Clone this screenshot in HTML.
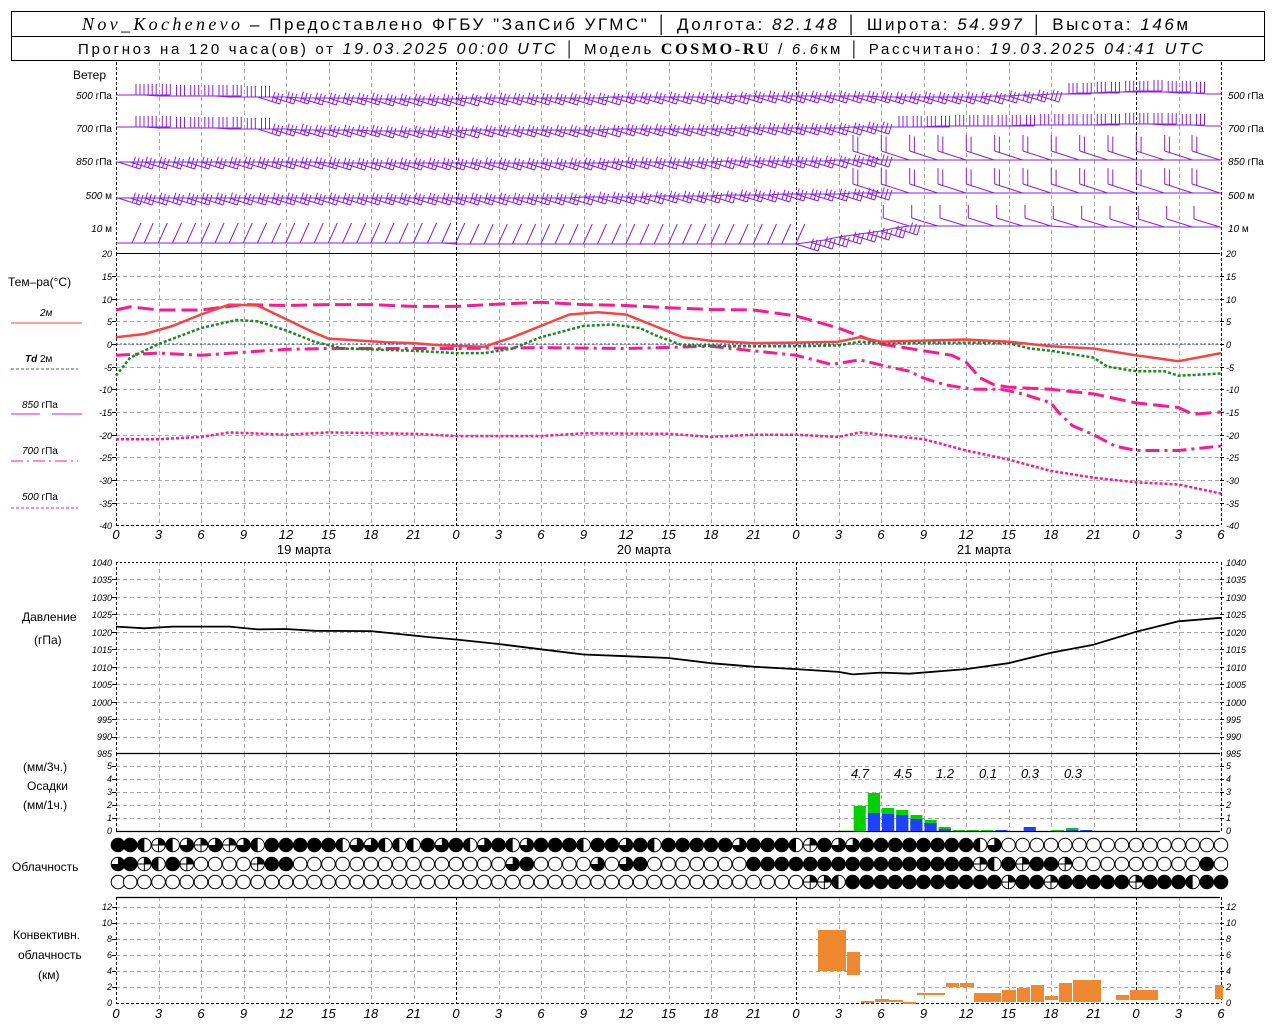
<!DOCTYPE html>
<html><head><meta charset="utf-8"><style>
html,body{margin:0;padding:0;background:#fff;}
svg{display:block;}
text{font-family:"Liberation Sans",sans-serif;fill:#000;}
.n{font-size:10px;font-style:italic;}
.ns{font-size:9px;font-style:italic;}
.l{font-size:12px;}
</style></head><body>
<svg id="g" width="1280" height="1024" viewBox="0 0 1280 1024" xmlns="http://www.w3.org/2000/svg">
<rect x="0" y="0" width="1280" height="1024" fill="#fff"/>
<g id="grid"></g>
<g id="data"></g>
<!-- header -->
<rect x="11.5" y="11.5" width="1253" height="49" fill="none" stroke="#000"/>
<line x1="11" y1="36.5" x2="1265" y2="36.5" stroke="#000"/>
<text x="82" y="30" textLength="158" lengthAdjust="spacing" style="font-size:18px;font-style:italic;font-family:'Liberation Serif',serif">Nov_Kochenevo</text>
<text x="250" y="30" textLength="938" lengthAdjust="spacing" style="font-size:17px">– Предоставлено ФГБУ "ЗапСиб УГМС" │ Долгота: <tspan font-style="italic">82.148</tspan> │ Широта: <tspan font-style="italic">54.997</tspan> │ Высота: <tspan font-style="italic">146</tspan>м</text>
<text x="78" y="54" textLength="1125" lengthAdjust="spacing" style="font-size:15px">Прогноз на 120 часа(ов) от <tspan font-style="italic" font-size="16">19.03.2025 00:00 UTC</tspan>  │ Модель <tspan font-weight="bold" font-family="Liberation Serif,serif" font-size="16">COSMO-RU</tspan> / <tspan font-style="italic">6.6</tspan>км │ Рассчитано: <tspan font-style="italic" font-size="16">19.03.2025 04:41 UTC</tspan></text>

<!-- wind labels -->
<text class="l" x="73" y="79">Ветер</text>
<g class="n" text-anchor="end">
<text x="112" y="99">500 <tspan font-style="normal">гПа</tspan></text>
<text x="112" y="132">700 <tspan font-style="normal">гПа</tspan></text>
<text x="112" y="165">850 <tspan font-style="normal">гПа</tspan></text>
<text x="112" y="199">500 <tspan font-style="normal">м</tspan></text>
<text x="112" y="232">10 <tspan font-style="normal">   м</tspan></text>
</g>
<g class="n">
<text x="1228" y="99">500 <tspan font-style="normal">гПа</tspan></text>
<text x="1228" y="132">700 <tspan font-style="normal">гПа</tspan></text>
<text x="1228" y="165">850 <tspan font-style="normal">гПа</tspan></text>
<text x="1228" y="199">500 <tspan font-style="normal">м</tspan></text>
<text x="1228" y="232">10 <tspan font-style="normal">   м</tspan></text>
</g>

<!-- temp legend -->
<text class="l" x="8" y="286">Тем–ра(°С)</text>
<text class="n" x="40" y="316" font-style="normal">2м</text>
<line x1="11" y1="323" x2="82" y2="323" stroke="#ff4040"/>
<text class="n" x="25" y="362"><tspan font-weight="bold">Td</tspan> <tspan font-style="normal">  2м</tspan></text>
<line x1="11" y1="369" x2="78" y2="369" stroke="#1a8a1a" stroke-dasharray="3,2"/>
<text class="n" x="22" y="408">850 <tspan font-style="normal">гПа</tspan></text>
<line x1="11" y1="414" x2="40" y2="414" stroke="#ff1a8c"/><line x1="52" y1="414" x2="82" y2="414" stroke="#ff1a8c"/>
<text class="n" x="22" y="454">700 <tspan font-style="normal">гПа</tspan></text>
<line x1="11" y1="461" x2="78" y2="461" stroke="#ff1a8c" stroke-dasharray="12,4,2,4"/>
<text class="n" x="22" y="500">500 <tspan font-style="normal">гПа</tspan></text>
<line x1="11" y1="508" x2="78" y2="508" stroke="#ff1a8c" stroke-dasharray="3,2"/>

<!-- temp ticks -->
<g class="ns" text-anchor="end">
<text x="112" y="257">20</text><text x="112" y="280">15</text><text x="112" y="303">10</text><text x="112" y="325">5</text><text x="112" y="348">0</text><text x="112" y="371">-5</text><text x="112" y="393">-10</text><text x="112" y="416">-15</text><text x="112" y="439">-20</text><text x="112" y="461">-25</text><text x="112" y="484">-30</text><text x="112" y="507">-35</text><text x="112" y="529">-40</text>
</g>
<g class="ns">
<text x="1226" y="257">20</text><text x="1226" y="280">15</text><text x="1226" y="303">10</text><text x="1226" y="325">5</text><text x="1226" y="348">0</text><text x="1226" y="371">-5</text><text x="1226" y="393">-10</text><text x="1226" y="416">-15</text><text x="1226" y="439">-20</text><text x="1226" y="461">-25</text><text x="1226" y="484">-30</text><text x="1226" y="507">-35</text><text x="1226" y="529">-40</text>
</g>

<!-- hour labels -->
<g class="n" text-anchor="middle" style="font-size:13px">
<text x="116" y="539">0</text><text x="158.5" y="539">3</text><text x="201" y="539">6</text><text x="243.5" y="539">9</text><text x="286" y="539">12</text><text x="328.5" y="539">15</text><text x="371" y="539">18</text><text x="413.5" y="539">21</text><text x="456" y="539">0</text><text x="498.5" y="539">3</text><text x="541" y="539">6</text><text x="583.5" y="539">9</text><text x="626" y="539">12</text><text x="668.5" y="539">15</text><text x="711" y="539">18</text><text x="753.5" y="539">21</text><text x="796" y="539">0</text><text x="838.5" y="539">3</text><text x="881" y="539">6</text><text x="923.5" y="539">9</text><text x="966" y="539">12</text><text x="1008.5" y="539">15</text><text x="1051" y="539">18</text><text x="1093.5" y="539">21</text><text x="1136" y="539">0</text><text x="1178.5" y="539">3</text><text x="1221" y="539">6</text>
</g>
<g class="l" text-anchor="middle" style="font-size:13px">
<text x="304" y="554">19 марта</text><text x="644" y="554">20 марта</text><text x="984" y="554">21 марта</text>
</g>

<!-- pressure -->
<text class="l" x="22" y="621">Давление</text>
<text class="l" x="34" y="644">(гПа)</text>
<g class="ns" text-anchor="end">
<text x="112" y="566">1040</text><text x="112" y="583">1035</text><text x="112" y="601">1030</text><text x="112" y="618">1025</text><text x="112" y="636">1020</text><text x="112" y="653">1015</text><text x="112" y="671">1010</text><text x="112" y="688">1005</text><text x="112" y="706">1000</text><text x="112" y="723">995</text><text x="112" y="740">990</text><text x="112" y="757">985</text>
</g>
<g class="ns">
<text x="1226" y="566">1040</text><text x="1226" y="583">1035</text><text x="1226" y="601">1030</text><text x="1226" y="618">1025</text><text x="1226" y="636">1020</text><text x="1226" y="653">1015</text><text x="1226" y="671">1010</text><text x="1226" y="688">1005</text><text x="1226" y="706">1000</text><text x="1226" y="723">995</text><text x="1226" y="740">990</text><text x="1226" y="757">985</text>
</g>

<!-- precip -->
<text class="l" x="23" y="771">(мм/3ч.)</text>
<text class="l" x="27" y="790">Осадки</text>
<text class="l" x="23" y="809">(мм/1ч.)</text>
<g class="ns" text-anchor="end">
<text x="112" y="769">5</text><text x="112" y="782">4</text><text x="112" y="795">3</text><text x="112" y="808">2</text><text x="112" y="821">1</text><text x="112" y="834">0</text>
</g>
<g class="ns">
<text x="1226" y="769">5</text><text x="1226" y="782">4</text><text x="1226" y="795">3</text><text x="1226" y="808">2</text><text x="1226" y="821">1</text><text x="1226" y="834">0</text>
</g>
<g class="n" style="font-size:13px" text-anchor="middle">
<text x="860" y="778">4.7</text><text x="903" y="778">4.5</text><text x="945" y="778">1.2</text><text x="988" y="778">0.1</text><text x="1030" y="778">0.3</text><text x="1073" y="778">0.3</text>
</g>

<text class="l" x="12" y="871">Облачность</text>

<!-- convective -->
<text class="l" x="13" y="939">Конвективн.</text>
<text class="l" x="18" y="959">облачность</text>
<text class="l" x="38" y="979">(км)</text>
<g class="ns" text-anchor="end">
<text x="112" y="910">12</text><text x="112" y="926">10</text><text x="112" y="942">8</text><text x="112" y="958">6</text><text x="112" y="974">4</text><text x="112" y="990">2</text><text x="112" y="1006">0</text>
</g>
<g class="ns">
<text x="1226" y="910">12</text><text x="1226" y="926">10</text><text x="1226" y="942">8</text><text x="1226" y="958">6</text><text x="1226" y="974">4</text><text x="1226" y="990">2</text><text x="1226" y="1006">0</text>
</g>
<g class="n" text-anchor="middle" style="font-size:13px">
<text x="116" y="1018">0</text><text x="158.5" y="1018">3</text><text x="201" y="1018">6</text><text x="243.5" y="1018">9</text><text x="286" y="1018">12</text><text x="328.5" y="1018">15</text><text x="371" y="1018">18</text><text x="413.5" y="1018">21</text><text x="456" y="1018">0</text><text x="498.5" y="1018">3</text><text x="541" y="1018">6</text><text x="583.5" y="1018">9</text><text x="626" y="1018">12</text><text x="668.5" y="1018">15</text><text x="711" y="1018">18</text><text x="753.5" y="1018">21</text><text x="796" y="1018">0</text><text x="838.5" y="1018">3</text><text x="881" y="1018">6</text><text x="923.5" y="1018">9</text><text x="966" y="1018">12</text><text x="1008.5" y="1018">15</text><text x="1051" y="1018">18</text><text x="1093.5" y="1018">21</text><text x="1136" y="1018">0</text><text x="1178.5" y="1018">3</text><text x="1221" y="1018">6</text>
</g>
</svg>
<script>
(function(){
var NS="http://www.w3.org/2000/svg";
var grid=document.getElementById('grid'),data=document.getElementById('data');
function el(p,tag,a){var e=document.createElementNS(NS,tag);for(var k in a)e.setAttribute(k,a[k]);p.appendChild(e);return e;}
function X(h){return 116+h*340/24;}
function line(p,x1,y1,x2,y2,s,w,d){var a={x1:x1,y1:y1,x2:x2,y2:y2,stroke:s,'stroke-width':w||1};if(d)a['stroke-dasharray']=d;return el(p,'line',a);}
var panels=[[62,253],[253,525],[562,753],[753,831],[897,1003]];
var hl=[[],[276,298.7,321.3,344,366.7,389.3,412,434.7,457.3,480,502.7],[],[766,779,792,805,818],[907,923,939,955,971,987]];
for(var p=562+17.45;p<753;p+=17.45)hl[2].push(p);
panels.forEach(function(pn,i){
  hl[i].forEach(function(y){line(grid,116,Math.round(y)+.5,1220,Math.round(y)+.5,'#aaa',1,'4,3');
    line(grid,112,Math.round(y)+.5,116,Math.round(y)+.5,'#000',1);line(grid,1220,Math.round(y)+.5,1224,Math.round(y)+.5,'#000',1);});
  for(var h=0;h<=78;h+=3){var x=Math.round(X(h))+.5;
    if(h%24==0||h==78)line(grid,x,pn[0],x,pn[1],'#000',1,'3,2');
    else line(grid,x,pn[0],x,pn[1],'#aaa',1,'4,3');}
});
line(grid,116,253.5,1220,253.5,'#000',1);
line(grid,116,562.5,1220,562.5,'#000',1,'2,2');
line(grid,116,753.5,1220,753.5,'#000',1.2);
line(grid,116,831.5,1220,831.5,'#000',1.2);
line(grid,116,897.5,1220,897.5,'#000',1.2);
line(grid,116,1003.5,1220,1003.5,'#000',1,'3,2');
line(grid,116,525.5,1220,525.5,'#000',1,'3,2');

function TY(t){return 344-t*4.533;}
function curve(pts,fy,s,w,d){var dd=pts.map(function(q,i){return (i?'L':'M')+X(q[0]).toFixed(1)+' '+fy(q[1]).toFixed(1);}).join(' ');
  var a={d:dd,fill:'none',stroke:s,'stroke-width':w,'stroke-linejoin':'round'};if(d)a['stroke-dasharray']=d;el(data,'path',a);}
line(data,116,344,1220,344,'#2040ff',1,'2,2');
curve([[0,-21],[3,-21],[6,-20.5],[8,-19.5],[12,-20],[15,-19.5],[21,-19.8],[24,-20.3],[30,-20.3],[33,-19.7],[39,-19.8],[42,-20.5],[45,-20],[48,-20],[51,-20.5],[52.5,-19.5],[54,-20],[57,-21],[60,-23.5],[63,-25.5],[66,-28],[69,-29.5],[72,-30.5],[75,-31],[78,-33]],TY,'#ff1a8c',2.5,'3,2');
curve([[0,-2.5],[3,-2],[6,-2.5],[9,-1.8],[12,-1.2],[15,-1],[24,-1],[30,-0.8],[36,-1],[42,-0.5],[45,-1.5],[48,-2.5],[50.5,-4.5],[52.5,-3.5],[54.5,-5],[56,-6],[57,-7.5],[58.5,-9],[60.5,-10],[62.5,-10],[64,-11],[66,-13],[66.5,-15],[67.5,-18],[69,-20],[70.5,-22.5],[72,-23.5],[75,-23.5],[78,-22.5]],TY,'#ff1a8c',3,'14,5,3,5');
curve([[0,7.5],[1,8.2],[3,7.5],[6,7.5],[9,8.7],[12,8.5],[15,8.7],[18,8.7],[21,8.3],[24,8.3],[27,8.8],[30,9.2],[33,8.7],[36,8.5],[39,8],[42,7.6],[45,7.5],[48,6.2],[51,3.5],[54,0],[57,-1.5],[59,-2.5],[60,-4],[61,-7.5],[62,-9],[63,-9.5],[66,-10],[69,-11],[72,-13],[75,-14],[76,-15.5],[78,-15]],TY,'#ff1a8c',3,'16,6');
curve([[0,-7],[1,-3],[3,0],[6,3.5],[8.5,5.3],[10,5],[12,3],[14,0.5],[16,-1],[18,-1.2],[21,-1.5],[24,-2],[26,-2],[28,-1],[30,1.5],[33,4],[35,4.3],[37,3.5],[38,2],[40,-0.3],[44,-0.5],[48,-0.5],[51,-0.3],[52.5,0.5],[54,0.2],[60,0.3],[63,0.2],[64.5,-1],[66,-1.5],[68,-2.5],[69,-3],[70,-5],[72,-6],[74,-6],[75,-7],[78,-6.5]],TY,'#1a8a1a',2.5,'3,2');
curve([[0,1.5],[2,2.2],[4,4],[6,6.5],[8,8.7],[10,8.5],[12,5.5],[14,2.5],[15,1.2],[17,0.8],[19,0.4],[21,0.2],[23,-0.3],[26,-0.6],[28,1.5],[30,4],[32,6.5],[34,7],[36,6.5],[38,4],[40,1.5],[42,0.7],[45,0.2],[48,0.3],[51,0.5],[52.5,1.5],[54,0.5],[60,1],[63,0.5],[66,-0.5],[69,-1],[72,-2.5],[75,-3.8],[78,-2]],TY,'#ff4040',2.5);
function PY(p){return 562+(1040-p)*3.49;}
curve([[0,1021.5],[2,1021],[4,1021.5],[8,1021.5],[10,1020.7],[12,1020.8],[14,1020.3],[18,1020.2],[22,1018.5],[24,1017.8],[27,1016.5],[30,1015],[33,1013.5],[36,1013],[39,1012.5],[42,1011],[45,1010],[48,1009.3],[51,1008.5],[52,1007.8],[54,1008.3],[56,1008],[60,1009.3],[63,1011],[66,1014],[69,1016.3],[72,1020],[75,1023],[78,1024]],PY,'#000',1.8);
var pr=[[51,830.7,null],[52,806,831],[53,793,813],[54,808,814],[55,810,815],[56,815,819],[57,820,823],[58,827,829],[59,830,null],[60,830,null],[61,830,831],[62,null,830],[63,null,831],[64,null,827],[66,830,null],[67,828,830],[68,null,830],[69,null,831]];
pr.forEach(function(b){var x=X(b[0])+1,w=X(b[0]+1)-X(b[0])-2;
 if(b[1]!=null)el(data,'rect',{x:x,y:b[1],width:w,height:831-b[1],fill:'#00d000'});
 if(b[2]!=null)el(data,'rect',{x:x,y:b[2],width:w,height:831-b[2],fill:'#2040ff'});});
[[818,846,930,971],[847,860,952,975],[861,874,1001,1003],[875,889,999,1002],[889,903,1000,1002],[903,916,1002,1004],[917,945,993,995],[946,959,983,987],[960,974,983,987],[974,1001,993,1002],[1002,1016,990,1002],[1017,1030,988,1002],[1031,1044,985,1002],[1045,1058,996,1000],[1059,1072,983,1002],[1073,1101,980,1002],[1116,1129,995,1000],[1130,1158,990,1000],[1215,1223,985,999]].forEach(function(r){
 el(data,'rect',{x:r[0],y:r[2],width:r[1]-r[0],height:r[3]-r[2],fill:'#f08830'});});
var rows=[
"FFHQHTQTQTHFFFFFHTTHHHFTFHTFHTFFFHFFTFHFFFFFTFFFHQFTTFFFFFFFFHTEEEEEEEEEEEEEEE",
"TFQHFQEEEEQFFEEEEEEEEEEEEEEETFEEEETETFEEEEEEEFFFFFFFFFFFFFFFFQHFQFFQEEEEEEEEEF",
"EEEEEEEEEEEEEEEEEEEEEEEEEEEEEEEEEEEEEEEEEEEEEEEEEQQHFFFFFFFFFFFQFFQFFFFFQFFFHFF"];
var ry=[845,864,882];
rows.forEach(function(s,ri){for(var i=0;i<79;i++){var c=s[i]||'E',cx=X(i)+(i==0?2:0),cy=ry[ri],r=6.8;
 if(i==78)cx=1221;
 el(data,'circle',{cx:cx,cy:cy,r:r,fill:c=='F'?'#000':'#fff',stroke:'#000','stroke-width':1});
 if(c=='H')el(data,'path',{d:'M'+cx+' '+(cy-r)+' A'+r+' '+r+' 0 0 0 '+cx+' '+(cy+r)+' Z',fill:'#000'});
 if(c=='T')el(data,'path',{d:'M'+cx+' '+cy+' L'+cx+' '+(cy-r)+' A'+r+' '+r+' 0 1 1 '+(cx-r)+' '+cy+' Z',fill:'#000'});
 if(c=='Q'){el(data,'path',{d:'M'+cx+' '+cy+' L'+cx+' '+(cy-r)+' A'+r+' '+r+' 0 0 1 '+(cx+r)+' '+cy+' Z',fill:'#000'});
   line(data,cx,cy-r,cx,cy+r,'#000',1);line(data,cx-r,cy,cx+r,cy,'#000',1);}
}});
var WC='#8a1ef0';
function barb(x,y,dx,dy,fx,fy,n,sp){var tx=x+dx,ty=y+dy,L=Math.sqrt(dx*dx+dy*dy);
 var d='M'+x.toFixed(1)+' '+y+' L'+tx.toFixed(1)+' '+ty;
 for(var k=0;k<n;k++){var px=tx-dx/L*sp*k,py=ty-dy/L*sp*k;d+=' M'+px.toFixed(1)+' '+py.toFixed(1)+' l'+fx+' '+fy;}
 el(data,'path',{d:d,fill:'none',stroke:WC,'stroke-width':1});}
var types={H:[26,0,0,-11,3,4,1],Z:[22,7,3,-10,3,4,1],L:[-28,-9,0,-16,2,5,2],S:[14,0,9,-20,1,3,1],Ls:[-26,-8,0,-13,1,4,2]};
var levels=[
 {y:[[0,95],[20,99],[48,96],[60,97],[72,91],[78,94]],segs:[[0,10,'H'],[10,66,'Z'],[66,76,'H']]},
 {y:[[0,127],[20,131],[48,128],[60,126],[72,124],[78,126]],segs:[[0,10,'H'],[10,54,'Z'],[54,76,'H']]},
 {y:[[0,162],[30,163],[54,160],[78,160]],segs:[[0,54,'Z'],[54,79,'L']]},
 {y:[[0,198],[30,198],[54,193],[78,193]],segs:[[0,54,'Z'],[54,79,'L']]},
 {y:[[0,243],[48,244],[56,226],[78,227]],segs:[[0,48,'S'],[48,56,'Z'],[56,79,'Ls']]}];
function interp(tab,h){for(var i=1;i<tab.length;i++)if(h<=tab[i][0]){var a=tab[i-1],b=tab[i];return a[1]+(b[1]-a[1])*(h-a[0])/(b[0]-a[0]);}return tab[tab.length-1][1];}
levels.forEach(function(lv){
 lv.segs.forEach(function(sg){var t=types[sg[2]];
  for(var h=sg[0];h<sg[1];h+=t[6]){var y=Math.round(interp(lv.y,h));var x=X(h)+(h==0?2:0);
   if(x>1220)x=1220;barb(x,y,t[0],t[1],t[2],t[3],t[4],t[5]);}
 });
 var d='';for(var h=0;h<=78;h+=1){d+=(h?'L':'M')+X(h).toFixed(1)+' '+Math.round(interp(lv.y,h));}
 el(data,'path',{d:d,fill:'none',stroke:WC,'stroke-width':1});
});
})();
</script>
</body></html>
